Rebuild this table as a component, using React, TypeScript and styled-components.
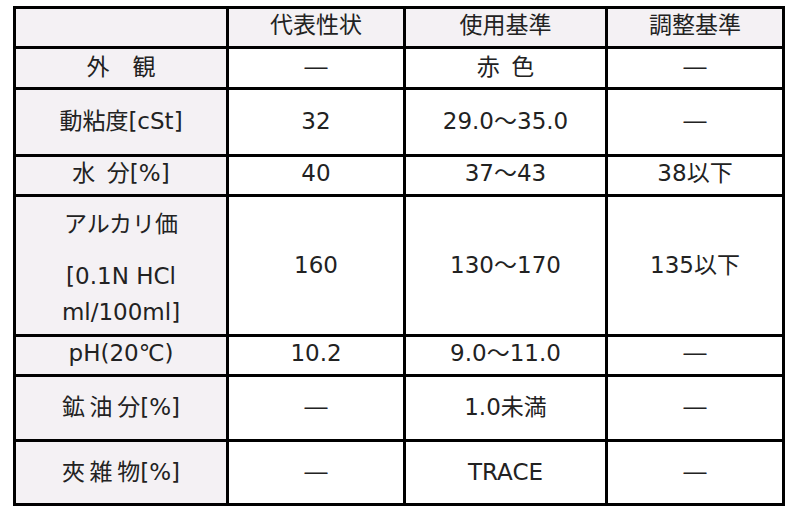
import React from "react";
import styled, { createGlobalStyle } from "styled-components";

const Global = createGlobalStyle`
  html, body {
    margin: 0;
    padding: 0;
    background: #ffffff;
  }
  body {
    font-family: "DejaVu Sans", "Noto Sans CJK JP", sans-serif;
  }
`;

const Sheet = styled.div`
  display: grid;
  grid-template-columns: 210px 174px 199px 174px;
  grid-template-rows: 37px 38px 64px 37px 137px 37px 62px 61px;
  gap: 3px;
  padding: 3px;
  background: #000000;
  width: max-content;
  margin: 6px 0 0 13px;
`;

const Cell = styled.div<{ $shade?: boolean; $lift?: boolean }>`
  background: ${(p) => (p.$shade ? "#f4f1f4" : "#ffffff")};
  display: flex;
  align-items: center;
  justify-content: center;
  text-align: center;
  font-size: 23px;
  line-height: 1.2;
  color: #222222;
  white-space: pre;
  padding-bottom: ${(p) => (p.$lift ? 4 : 0)}px;
`;

const Stack = styled.div`
  display: flex;
  flex-direction: column;
  align-items: center;
  padding-top: 5px;
`;

const StackLine = styled.span<{ $gap?: number }>`
  display: block;
  line-height: 36px;
  margin-bottom: ${(p) => p.$gap ?? 0}px;
`;

const DASH = "―";

type Row = {
  label: React.ReactNode;
  values: [string, string, string];
  lift?: boolean;
};

const rows: Row[] = [
  { label: "外　観", values: [DASH, "赤\u2002色", DASH] },
  { label: "動粘度[cSt]", values: ["32", "29.0～35.0", DASH] },
  { label: "水\u2002分[%]", values: ["40", "37～43", "38以下"], lift: true },
  {
    label: (
      <Stack>
        <StackLine $gap={16}>アルカリ価</StackLine>
        <StackLine>[0.1N HCl</StackLine>
        <StackLine>ml/100ml]</StackLine>
      </Stack>
    ),
    values: ["160", "130～170", "135以下"],
  },
  { label: "pH(20℃)", values: ["10.2", "9.0～11.0", DASH], lift: true },
  { label: "鉱\u2009油\u2009分[%]", values: [DASH, "1.0未満", DASH] },
  { label: "夾\u2009雑\u2009物[%]", values: [DASH, "TRACE", DASH] },
];

const headers = ["", "代表性状", "使用基準", "調整基準"];

export default function App() {
  return (
    <>
      <Global />
      <Sheet>
        {headers.map((h, i) => (
          <Cell key={`h${i}`} $shade $lift>
            {h}
          </Cell>
        ))}
        {rows.map((r, i) => (
          <React.Fragment key={`r${i}`}>
            <Cell $shade $lift={r.lift}>
              {r.label}
            </Cell>
            {r.values.map((v, j) => (
              <Cell key={`v${i}-${j}`} $lift={r.lift}>
                {v}
              </Cell>
            ))}
          </React.Fragment>
        ))}
      </Sheet>
    </>
  );
}
